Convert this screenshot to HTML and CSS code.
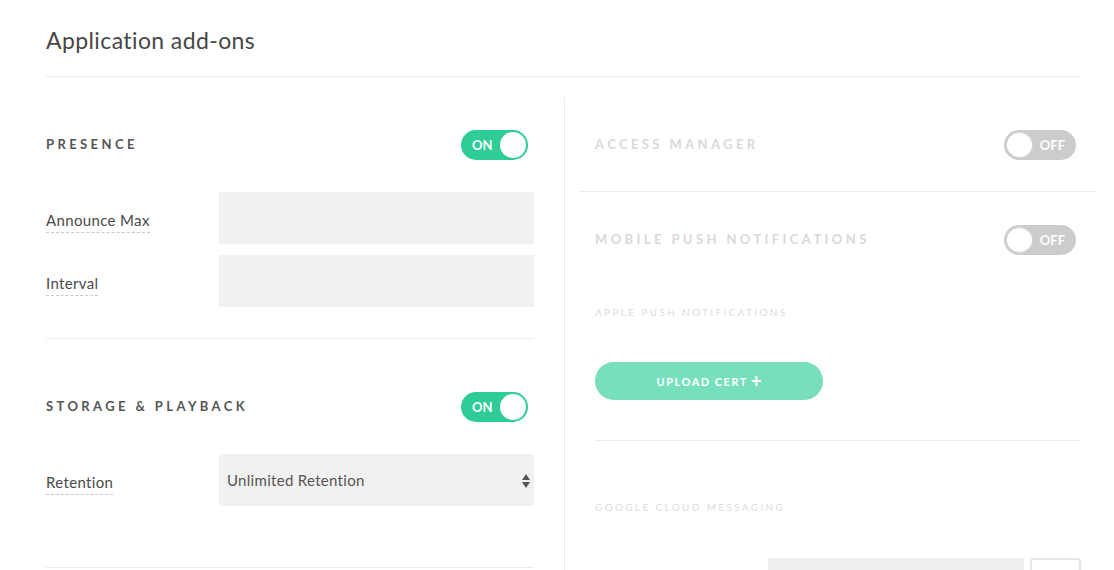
FILE: index.html
```html
<!DOCTYPE html>
<html>
<head>
<meta charset="utf-8">
<link rel="stylesheet" href="styles.css">
</head>
<body>
<div class="page">
  <h1 class="title">Application add-ons</h1>
  <div class="cols">
    <div class="left">
      <section class="sec sec-presence">
        <div class="sec-head">
          <span class="sec-title">PRESENCE</span>
          <span class="toggle on"><span class="t-txt">ON</span><span class="knob"></span></span>
        </div>
        <div class="field f-first">
          <span class="lbl"><span class="lbl-txt">Announce Max</span></span>
          <div class="input"></div>
        </div>
        <div class="field f-next">
          <span class="lbl"><span class="lbl-txt">Interval</span></span>
          <div class="input"></div>
        </div>
      </section>
      <section class="sec sec-storage">
        <div class="sec-head">
          <span class="sec-title">STORAGE &amp; PLAYBACK</span>
          <span class="toggle on"><span class="t-txt">ON</span><span class="knob"></span></span>
        </div>
        <div class="field f-first">
          <span class="lbl"><span class="lbl-txt">Retention</span></span>
          <div class="input select"><span>Unlimited Retention</span><span class="arrows"><span class="up"></span><span class="down"></span></span></div>
        </div>
      </section>
    </div>
    <div class="right">
      <section class="rsec rsec-access">
        <div class="sec-head">
          <span class="sec-title dim">ACCESS MANAGER</span>
          <span class="toggle off"><span class="knob"></span><span class="t-txt">OFF</span></span>
        </div>
      </section>
      <section class="rsec rsec-push">
        <div class="sec-head">
          <span class="sec-title dim">MOBILE PUSH NOTIFICATIONS</span>
          <span class="toggle off"><span class="knob"></span><span class="t-txt">OFF</span></span>
        </div>
        <div class="sub-title">APPLE PUSH NOTIFICATIONS</div>
        <div class="btn">UPLOAD CERT <span class="plus">+</span></div>
        <div class="inner-hr"></div>
        <div class="sub-title gcm">GOOGLE CLOUD MESSAGING</div>
        <div class="gcm-row">
          <div class="gcm-input"></div>
          <div class="gcm-btn"></div>
        </div>
      </section>
    </div>
  </div>
</div>
</body>
</html>
```
FILE: styles.css
```css
html, body {
  margin: 0;
  padding: 0;
  background: #fff;
  overflow: hidden;
}
body {
  font-family: "Lato", "Liberation Sans", sans-serif;
  color: #444;
  width: 1114px;
  height: 570px;
}
.page {
  padding-left: 46px;
  width: 1034px;
}
.title {
  margin: 0;
  padding-top: 26px;
  height: 50px;
  font-size: 23px;
  font-weight: 400;
  letter-spacing: 0.4px;
  color: #474747;
  line-height: 28px;
  border-bottom: 1px solid #ececec;
}
.cols {
  display: flex;
  margin-top: 20px;
}
.left {
  width: 488px;
  flex: none;
}
.right {
  flex: none;
  width: 531px;
  margin-left: 30px;
  margin-right: -16px;
  border-left: 1px solid #ececec;
  height: 480px;
}
.sec-head {
  display: flex;
  justify-content: space-between;
  align-items: center;
  height: 30px;
}
.sec-title {
  font-size: 13px;
  font-weight: 700;
  letter-spacing: 3.4px;
  color: #555;
  padding-bottom: 3px;
}
.sec-title.dim {
  color: #d9d9d9;
}
.sec-head .toggle.on {
  margin-right: 6px;
}
.sec-head .toggle.off {
  margin-right: 5px;
}
.sec-presence {
  padding-top: 33px;
  padding-bottom: 31px;
  border-bottom: 1px solid #ececec;
}
.sec-storage {
  padding-top: 53px;
  padding-bottom: 61px;
  border-bottom: 1px solid #ececec;
}
.field {
  display: flex;
  align-items: center;
}
.f-first { margin-top: 32px; }
.f-next { margin-top: 11px; }
.lbl {
  width: 173px;
  flex: none;
  padding-top: 3px;
}
.lbl-txt {
  font-size: 15px;
  letter-spacing: 0.35px;
  color: #4a4a4a;
  border-bottom: 1px dashed #c8c8c8;
  padding-bottom: 3px;
}
.input {
  flex: 1;
  height: 52px;
  background: #f1f1f1;
}
.select {
  border-radius: 4px;
  display: flex;
  align-items: center;
  justify-content: space-between;
  padding: 0 4px 0 8px;
  font-size: 15px;
  letter-spacing: 0.3px;
  color: #555;
}
.arrows {
  display: flex;
  flex-direction: column;
  gap: 2px;
  padding-top: 2px;
}
.arrows .up {
  width: 0; height: 0;
  border-left: 4px solid transparent;
  border-right: 4px solid transparent;
  border-bottom: 6px solid #555;
}
.arrows .down {
  width: 0; height: 0;
  border-left: 4px solid transparent;
  border-right: 4px solid transparent;
  border-top: 6px solid #555;
}
.toggle {
  box-sizing: border-box;
  height: 30px;
  border-radius: 15px;
  border: 2px solid;
  display: flex;
  align-items: center;
  justify-content: space-between;
  font-size: 13px;
  font-weight: 700;
  color: #fff;
}
.toggle.on {
  width: 67px;
  background: #2ecc97;
  border-color: #2ecc97;
  padding-left: 9px;
}
.toggle.off {
  width: 72px;
  background: #cccccc;
  border-color: #cccccc;
  padding-right: 9px;
}
.knob {
  width: 26px;
  height: 26px;
  border-radius: 50%;
  background: #fff;
}
.toggle.off .knob {
  box-sizing: border-box;
  width: 27px;
  border: 1px solid #d4d4d4;
}
.rsec {
  padding: 0 15px 0 30px;
}
.rsec-access {
  padding-top: 33px;
  padding-bottom: 31px;
  margin-left: 15px;
  padding-left: 15px;
  border-bottom: 1px solid #ececec;
}
.rsec-push {
  padding-top: 33px;
}
.sub-title {
  margin-top: 51px;
  font-size: 10px;
  letter-spacing: 2.35px;
  color: #dcdcdc;
  line-height: 12px;
}
.btn {
  margin-top: 44px;
  width: 228px;
  height: 38px;
  border-radius: 19px;
  background: #77dfbd;
  color: #fff;
  font-size: 11px;
  font-weight: 700;
  letter-spacing: 1.5px;
  display: flex;
  align-items: center;
  justify-content: center;
}
.plus {
  font-size: 18px;
  font-weight: 900;
  margin-left: 3px;
  letter-spacing: 0;
  line-height: 1;
}
.inner-hr {
  margin-top: 40px;
  border-top: 1px solid #ececec;
}
.sub-title.gcm {
  margin-top: 60px;
}
.gcm-row {
  display: flex;
  justify-content: flex-end;
  gap: 6px;
  margin-top: 45px;
}
.gcm-input {
  width: 256px;
  height: 40px;
  background: #eeeeee;
}
.gcm-btn {
  box-sizing: border-box;
  width: 51px;
  height: 40px;
  border: 2px solid #e6e6e6;
  border-radius: 4px;
}
```
